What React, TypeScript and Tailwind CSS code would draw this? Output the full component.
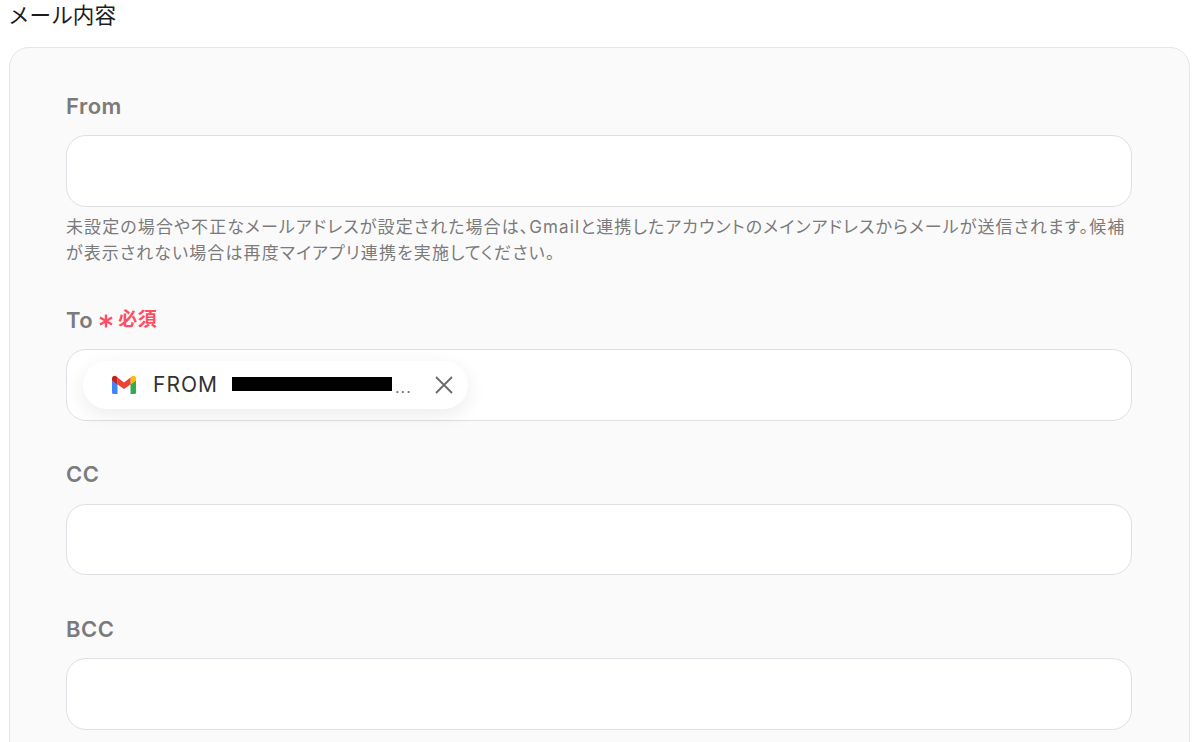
import React from "react";

function GmailIcon() {
  return (
    <svg width="26" height="20" viewBox="0 0 26 20" className="block">
      <path d="M1 5.5 V17.5 Q1 19 2.5 19 H6.5 V8.5 Z" fill="#4285f4" />
      <path d="M19.5 8.5 V19 H23.5 Q25 19 25 17.5 V5.5 Z" fill="#34a853" />
      <path d="M19.5 2.5 V9.5 L25 5.5 V3.5 C25 1 22 0 20.2 1.7 Z" fill="#fbbc04" />
      <path d="M6.5 9.5 V2.5 L13 7.5 L19.5 2.5 V9.5 L13 14 Z" fill="#ea4335" />
      <path d="M1 3.5 V5.5 L6.5 9.5 V2.5 L5.8 1.7 C4 0 1 1 1 3.5 Z" fill="#c5221f" />
    </svg>
  );
}

function Field({ label, required, boxClass = "mt-[15px] h-[72px]", children }: { label: string; required?: boolean; boxClass?: string; children?: React.ReactNode }) {
  return (
    <div>
      <div className="flex items-center h-[28px]">
        <span className="text-[22px] font-semibold tracking-[0.5px] text-[#7b7b7b] leading-[28px]">{label}</span>
        {required && (
          <>
            <svg width="14" height="14" viewBox="0 0 14 14" className="ml-[6px] mt-[1px]" stroke="#ff4d63" strokeWidth="2.4" fill="none">
              <path d="M7 0.5 V13.5 M1 3.5 L13 10.5 M13 3.5 L1 10.5" />
            </svg>
            <span className="ml-[5px] text-[19px] font-semibold tracking-[0.5px] text-[#ff4d63] leading-[28px]">必須</span>
          </>
        )}
      </div>
      <div className={`${boxClass} bg-white border border-[#dfe0e6] rounded-[20px] flex items-center px-[16px]`}>
        {children}
      </div>
    </div>
  );
}

export default function App() {
  return (
    <div className="w-[1201px] h-[742px] overflow-hidden bg-white antialiased font-['Inter','Noto_Sans_CJK_JP',sans-serif]">
      <div className="pl-[8px] h-[47px]">
        <h1 className="text-[21.6px] font-normal text-[#1c1c1c] leading-[30px]">メール内容</h1>
      </div>
      <div className="mx-[9px] w-[1181px] h-[760px] bg-[#fafafa] border border-[#e6e6e6] rounded-[20px] pl-[56px] pr-[57px] pt-[44px]">
        <Field label="From" />
        <p className="mt-[7px] text-[17px] tracking-[1.1px] leading-[26px] text-[#7b7b7b] [font-feature-settings:'palt']">
          未設定の場合や不正なメールアドレスが設定された場合は、Gmailと連携したアカウントのメインアドレスからメールが送信されます。候補が表示されない場合は再度マイアプリ連携を実施してください。
        </p>
        <div className="mt-[40px]">
          <Field label="To" required>
            <div className="w-[385px] h-[48px] bg-white rounded-full shadow-[0_6px_20px_rgba(0,0,0,0.08)] flex items-center pl-[28px] pr-[14px]">
              <GmailIcon />
              <span className="ml-[16px] text-[21px] tracking-[1px] text-[#333]">FROM</span>
              <span className="ml-[14px] w-[160px] h-[14px] bg-black -translate-y-[1px]" />
              <span className="ml-[3px] text-[16px] tracking-[1px] text-[#777] leading-[20px] mt-[3px]">...</span>
              <svg width="20" height="20" viewBox="0 0 20 20" stroke="#6a6a6a" strokeWidth="1.8" className="ml-auto">
                <path d="M2 2 L18 18 M18 2 L2 18" />
              </svg>
            </div>
          </Field>
        </div>
        <div className="mt-[39px]">
          <Field label="CC" boxClass="mt-[16px] h-[71px]" />
        </div>
        <div className="mt-[40px]">
          <Field label="BCC" />
        </div>
      </div>
    </div>
  );
}
